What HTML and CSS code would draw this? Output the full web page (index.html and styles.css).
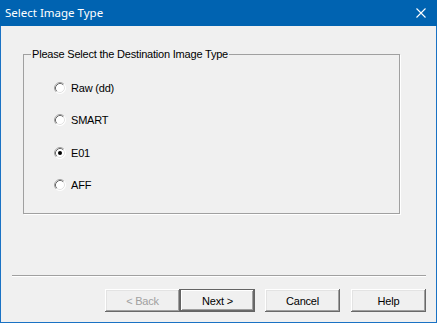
FILE: index.html
```html
<!DOCTYPE html>
<html>
<head>
<meta charset="utf-8">
<link rel="stylesheet" href="styles.css">
</head>
<body>
<div class="window">
  <div class="titlebar">
    <span class="title">Select Image Type</span>
    <svg class="close" width="10" height="10" viewBox="0 0 10 10"><path d="M0.5 0.5 L9.5 9.5 M9.5 0.5 L0.5 9.5" stroke="#fff" stroke-width="1.1" fill="none"/></svg>
  </div>
  <div class="content">
    <fieldset class="group">
      <legend>Please Select the Destination Image Type</legend>
      <div class="options">
        <label class="option"><svg class="radio" width="12" height="12" viewBox="0 0 12 12"><circle cx="6" cy="6" r="5.5" fill="#fff" stroke="#fff"/><path d="M2.11 9.89 A5.5 5.5 0 0 1 9.89 2.11" stroke="#a0a0a0" fill="none"/><path d="M2.82 9.18 A4.5 4.5 0 0 1 9.18 2.82" stroke="#696969" fill="none"/><path d="M2.82 9.18 A4.5 4.5 0 0 0 9.18 2.82" stroke="#e3e3e3" fill="none"/></svg><span>Raw (dd)</span></label>
        <label class="option"><svg class="radio" width="12" height="12" viewBox="0 0 12 12"><circle cx="6" cy="6" r="5.5" fill="#fff" stroke="#fff"/><path d="M2.11 9.89 A5.5 5.5 0 0 1 9.89 2.11" stroke="#a0a0a0" fill="none"/><path d="M2.82 9.18 A4.5 4.5 0 0 1 9.18 2.82" stroke="#696969" fill="none"/><path d="M2.82 9.18 A4.5 4.5 0 0 0 9.18 2.82" stroke="#e3e3e3" fill="none"/></svg><span>SMART</span></label>
        <label class="option"><svg class="radio" width="12" height="12" viewBox="0 0 12 12"><circle cx="6" cy="6" r="5.5" fill="#fff" stroke="#fff"/><path d="M2.11 9.89 A5.5 5.5 0 0 1 9.89 2.11" stroke="#a0a0a0" fill="none"/><path d="M2.82 9.18 A4.5 4.5 0 0 1 9.18 2.82" stroke="#696969" fill="none"/><path d="M2.82 9.18 A4.5 4.5 0 0 0 9.18 2.82" stroke="#e3e3e3" fill="none"/><circle cx="6" cy="6" r="2" fill="#000"/></svg><span>E01</span></label>
        <label class="option"><svg class="radio" width="12" height="12" viewBox="0 0 12 12"><circle cx="6" cy="6" r="5.5" fill="#fff" stroke="#fff"/><path d="M2.11 9.89 A5.5 5.5 0 0 1 9.89 2.11" stroke="#a0a0a0" fill="none"/><path d="M2.82 9.18 A4.5 4.5 0 0 1 9.18 2.82" stroke="#696969" fill="none"/><path d="M2.82 9.18 A4.5 4.5 0 0 0 9.18 2.82" stroke="#e3e3e3" fill="none"/></svg><span>AFF</span></label>
      </div>
    </fieldset>
    <div class="separator"></div>
    <div class="buttons">
      <button class="btn disabled">&lt; Back</button>
      <button class="btn default">Next &gt;</button>
      <button class="btn cancel">Cancel</button>
      <button class="btn help">Help</button>
    </div>
  </div>
</div>
</body>
</html>
```

FILE: styles.css
```css
html, body {
  margin: 0;
  padding: 0;
  background: #f0f0f0;
}
.window {
  width: 437px;
  height: 323px;
  box-sizing: border-box;
  border: 1px solid #1a72c4;
  border-top: none;
  background: #f0f0f0;
  display: flex;
  flex-direction: column;
  font-family: "Liberation Sans", Arial, sans-serif;
  font-size: 11px;
  letter-spacing: -0.2px;
  color: #000;
}
.titlebar {
  height: 26px;
  margin: 0 -1px;
  background: #0063b1;
  display: flex;
  align-items: center;
  justify-content: space-between;
  padding: 0 11px 0 5px;
}
.title {
  color: #fff;
  font-family: "Noto Sans", "Open Sans", sans-serif;
  font-size: 11.5px;
  letter-spacing: 0;
  line-height: 16px;
}
.close {
  display: block;
}
.content {
  display: flex;
  flex-direction: column;
}
.group {
  margin: 22px 36px 0 22px;
  padding: 0;
  border: 1px solid #a0a0a0;
  box-shadow: 1px 1px 0 #fff;
}
.group legend {
  margin-left: 7px;
  padding: 0 1px;
  line-height: 13px;
}
.options {
  display: grid;
  grid-template-rows: 33px 32px 33px 32px;
  padding: 10px 0 12px 30px;
}
.option {
  display: flex;
  align-items: center;
  gap: 5px;
}
.radio {
  display: block;
}
.separator {
  margin: 61px 10px 0 11px;
  height: 1px;
  background: #a0a0a0;
  border-bottom: 1px solid #fff;
}
.buttons {
  display: flex;
  justify-content: flex-end;
  margin: 12px 10px 0 0;
}
.btn {
  width: 75px;
  height: 23px;
  margin: 0;
  padding: 0;
  border: none;
  background: #f0f0f0;
  font-family: "Liberation Sans", Arial, sans-serif;
  font-size: 11px;
  letter-spacing: -0.2px;
  color: #000;
  box-shadow: inset -1px -1px 0 #696969, inset 1px 1px 0 #fff, inset -2px -2px 0 #a0a0a0, inset 2px 2px 0 #e3e3e3;
}
.btn.disabled {
  color: #a0a0a0;
}
.btn.default {
  box-shadow: inset 0 0 0 1px #646464, inset -2px -2px 0 #696969, inset 2px 2px 0 #fff, inset -3px -3px 0 #a0a0a0;
}
.btn.cancel {
  margin-left: 10px;
}
.btn.help {
  margin-left: 11px;
}
```
